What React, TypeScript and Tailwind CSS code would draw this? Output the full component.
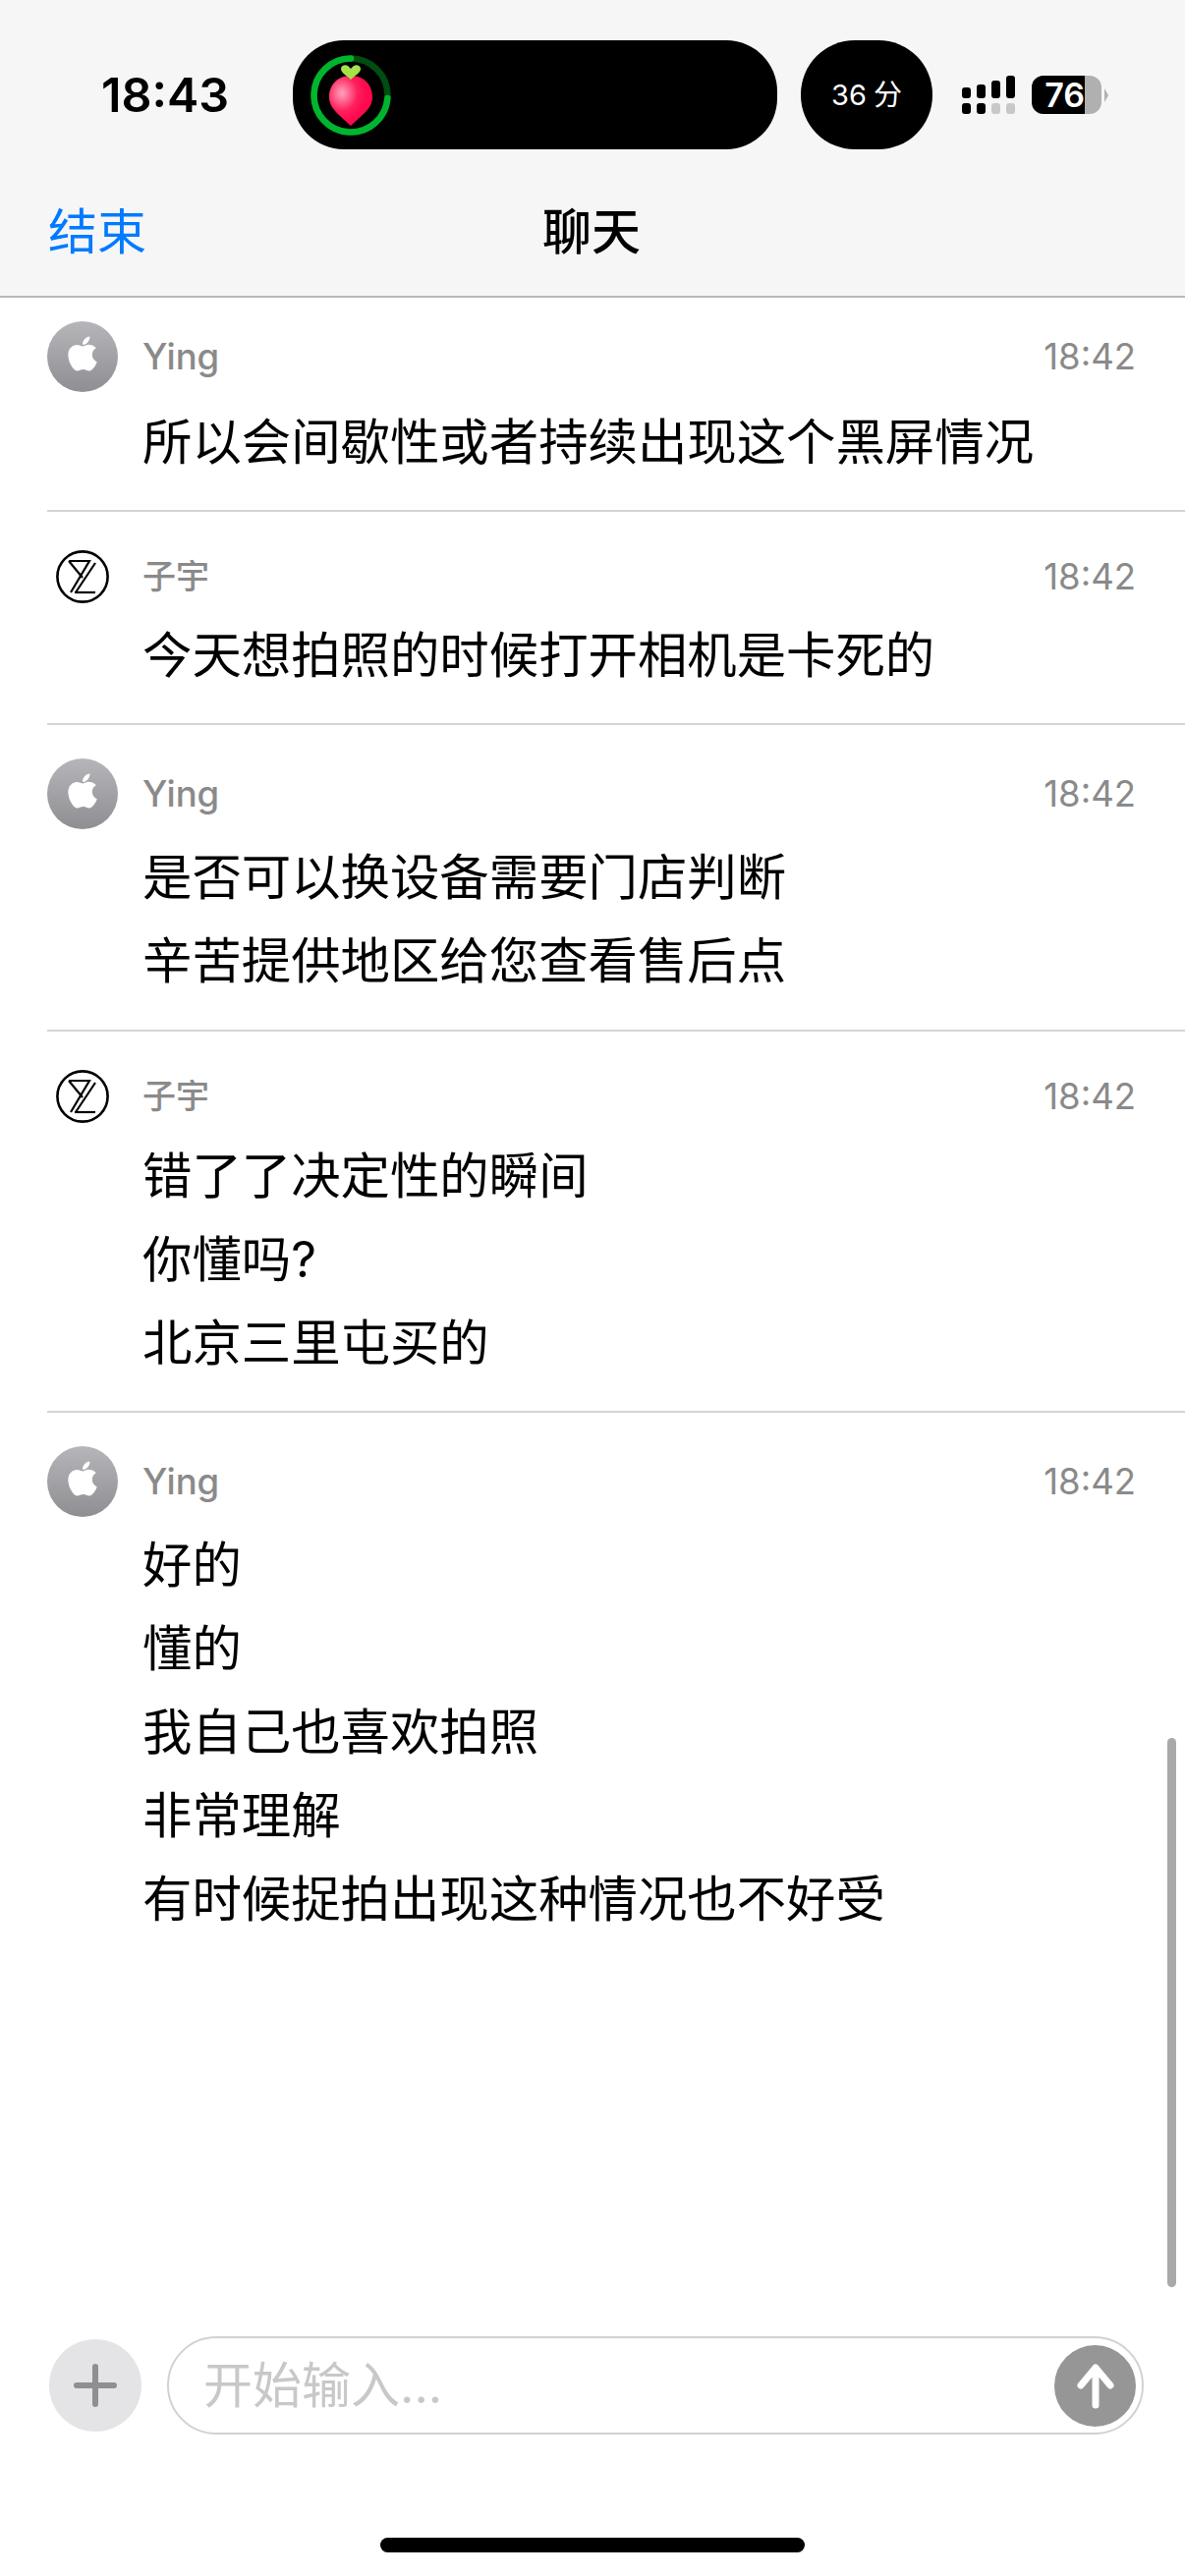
import React from "react";

const cjk = "font-['Inter','Noto_Sans_CJK_SC',sans-serif]";

function AppleAvatar() {
  return (
    <div className="w-[72px] h-[72px] rounded-full bg-gradient-to-b from-[#b6b6ba] to-[#8e8e93] flex items-center justify-center shrink-0">
      <svg viewBox="0 0 384 512" className="w-[32px] h-[40px] mb-[6px]" fill="#ffffff">
        <path d="M318.7 268.7c-.2-36.7 16.4-64.4 50-84.8-18.8-26.9-47.2-41.7-84.7-44.6-35.5-2.8-74.3 20.7-88.5 20.7-15 0-49.4-19.7-76.4-19.7C63.3 141.2 4 184.8 4 273.5q0 39.3 14.4 81.2c12.8 36.7 59 126.7 107.2 125.2 25.2-.6 43-17.9 75.8-17.9 31.8 0 48.3 17.9 76.4 17.9 48.6-.7 90.4-82.5 102.6-119.3-65.2-30.7-61.7-90-61.7-91.9zm-56.6-164.2c27.3-32.4 24.8-61.9 24-72.5-24.1 1.4-52 16.4-67.9 34.9-17.5 19.8-27.8 44.3-25.6 71.9 26.1 2 49.9-11.4 69.5-34.3z" />
      </svg>
    </div>
  );
}

function ZyAvatar() {
  return (
    <div className="w-[72px] h-[72px] flex items-center justify-center shrink-0">
      <svg viewBox="0 0 54 54" className="w-[54px] h-[54px]" fill="none" stroke="#000000">
        <circle cx="27" cy="27" r="25.6" strokeWidth="2.6" />
        <path d="M13 11H34L15 43" strokeWidth="2.2" />
        <path d="M19 43H40" strokeWidth="2.2" />
        <path d="M40 13L20 43" strokeWidth="2.2" />
        <path d="M13 11L27 28" strokeWidth="2.2" />
      </svg>
    </div>
  );
}

type MsgProps = {
  who: "Ying" | "子宇";
  lines: string[];
  rowClass: string;
  bodyClass: string;
};

function Msg({ who, lines, rowClass, bodyClass }: MsgProps) {
  return (
    <div className={rowClass}>
      <div className="flex items-center h-[72px] pr-[50px]">
        {who === "Ying" ? <AppleAvatar /> : <ZyAvatar />}
        <span className={who === "Ying" ? "ml-[25px] text-[36.5px] leading-[72px] font-medium text-[#8a8a8a]" : "ml-[25px] text-[34px] leading-[72px] font-medium text-[#8a8a8a]"}>{who}</span>
        <span className="ml-auto text-[36.5px] leading-[72px] text-[#8a8a8a]">18:42</span>
      </div>
      <div className={bodyClass}>
        {lines.map((l) => (
          <div key={l} className="text-[50.4px] leading-[85px] text-black whitespace-nowrap">
            {l}
          </div>
        ))}
      </div>
    </div>
  );
}

function StatusBar() {
  return (
    <div className="flex items-center pt-[41px]">
      <div className="w-[298px] pl-[103px] text-[48.5px] leading-[111px] font-semibold text-black">18:43</div>
      <div className="w-[493px] h-[111px] rounded-[52px] bg-black flex items-center pl-[18px]">
        <svg viewBox="0 0 82 82" className="w-[82px] h-[82px]">
          <defs>
            <radialGradient id="fruit" cx="0.3" cy="0.35" r="0.55">
              <stop offset="0" stopColor="#ffa3bc" />
              <stop offset="0.65" stopColor="#ff1f5c" />
              <stop offset="1" stopColor="#ff0a4e" />
            </radialGradient>
          </defs>
          <circle cx="41" cy="41" r="37.5" fill="none" stroke="#004d12" strokeWidth="6.5" />
          <path d="M78.4 44A37.5 37.5 0 1 1 41 3.5" fill="none" stroke="#00b52e" strokeWidth="6.5" strokeLinecap="round" />
          <path d="M41 21C27 21 19 31 19 43C19 55 31 62 41 72C51 62 63 55 63 43C63 31 55 21 41 21Z" fill="url(#fruit)" />
          <path d="M41 25C36 20 31 18 31 14C31 11 35 9 38 11C39.5 12 41 14 41 14C41 14 42.5 12 44 11C47 9 51 11 51 14C51 18 46 20 41 25Z" fill="#a5e24a" />
        </svg>
      </div>
      <div className="ml-[24px] w-[134px] h-[111px] rounded-[55px] bg-black flex items-center justify-center text-white text-[29px] leading-none gap-[7px]">
        <span>36</span>
        <span>分</span>
      </div>
      <div className="ml-[30px] w-[54px] h-[39px] flex gap-[6px]">
        <div className="flex-1 flex flex-col justify-end gap-[5px]">
          <div className="h-[11px] rounded-[3px] bg-black" />
          <div className="h-[11px] rounded-[3px] bg-black" />
        </div>
        <div className="flex-1 flex flex-col justify-end gap-[5px]">
          <div className="h-[14px] rounded-[3px] bg-black" />
          <div className="h-[11px] rounded-[3px] bg-black" />
        </div>
        <div className="flex-1 flex flex-col justify-end gap-[5px]">
          <div className="h-[18px] rounded-[3px] bg-black" />
          <div className="h-[11px] rounded-[3px] bg-[#c8c8c8]" />
        </div>
        <div className="flex-1 flex flex-col justify-end gap-[5px]">
          <div className="h-[23px] rounded-[3px] bg-black" />
          <div className="h-[11px] rounded-[3px] bg-[#c8c8c8]" />
        </div>
      </div>
      <div className="ml-[17px] flex items-center">
        <div className="w-[71px] h-[39px] rounded-[12px] overflow-hidden flex bg-[#b0b0b0]">
          <div className="w-[54px] h-full bg-black text-white text-[34px] font-semibold leading-[39px] text-right">76</div>
        </div>
        <div className="ml-[3px] w-0 h-0 border-y-[7px] border-y-transparent border-l-[4px] border-l-[#b0b0b0]" />
      </div>
    </div>
  );
}

export default function App() {
  return (
    <div className={`relative w-[1206px] h-[2622px] bg-white flex flex-col overflow-hidden ${cjk}`}>
      <header className="h-[303px] shrink-0 bg-[#f6f6f6] border-b-2 border-[#b8b8b8]">
        <StatusBar />
        <div className="grid grid-cols-[1fr_auto_1fr] pl-[49px] pr-[51px] pt-[36px]">
          <span className="text-[50px] leading-[96px] text-[#007aff]">结束</span>
          <span className="text-[50px] leading-[96px] font-medium text-black">聊天</span>
          <span />
        </div>
      </header>

      <main className="flex-1 min-h-0 overflow-hidden">
        <Msg who="Ying" lines={["所以会间歇性或者持续出现这个黑屏情况"]} rowClass="ml-[48px] pt-[24px] pb-[27px]" bodyClass="pl-[97px] mt-[8px]" />
        <Msg who="子宇" lines={["今天想拍照的时候打开相机是卡死的"]} rowClass="ml-[48px] pt-[30px] pb-[27px] border-t-2 border-[#d4d4d4]" bodyClass="pl-[97px] mt-[1px]" />
        <Msg who="Ying" lines={["是否可以换设备需要门店判断", "辛苦提供地区给您查看售后点"]} rowClass="ml-[48px] pt-[34px] pb-[28px] border-t-2 border-[#d4d4d4]" bodyClass="pl-[97px] mt-[6px]" />
        <Msg who="子宇" lines={["错了了决定性的瞬间", "你懂吗?", "北京三里屯买的"]} rowClass="ml-[48px] pt-[30px] pb-[27px] border-t-2 border-[#d4d4d4]" bodyClass="pl-[97px] mt-[2px]" />
        <Msg who="Ying" lines={["好的", "懂的", "我自己也喜欢拍照", "非常理解", "有时候捉拍出现这种情况也不好受"]} rowClass="ml-[48px] pt-[34px] border-t-2 border-[#d4d4d4]" bodyClass="pl-[97px] mt-[6px]" />
      </main>

      <footer className="shrink-0">
        <div className="flex items-center pl-[50px]">
          <div className="w-[94px] h-[94px] rounded-full bg-[#e4e4e6] flex items-center justify-center">
            <svg viewBox="0 0 44 44" className="w-[44px] h-[44px]" fill="none" stroke="#8e8e93" strokeWidth="6" strokeLinecap="round">
              <path d="M22 3V41M3 22H41" />
            </svg>
          </div>
          <div className="ml-[26px] w-[994px] h-[100px] rounded-[50px] border-2 border-[#d2d2d2] flex items-center justify-between pl-[35px] pr-[6px]">
            <span className="text-[50px] leading-none text-[#c8c8c8]">开始输入...</span>
            <div className="w-[83px] h-[83px] rounded-full bg-[#969696] flex items-center justify-center">
              <svg viewBox="0 0 44 48" className="w-[44px] h-[48px]" fill="none" stroke="#ffffff" strokeWidth="7" strokeLinecap="round" strokeLinejoin="round">
                <path d="M22 44V6M7 24L22 6L37 24" />
              </svg>
            </div>
          </div>
        </div>
        <div className="mt-[105px] mx-auto w-[432px] h-[15px] rounded-full bg-black" />
        <div className="h-[24px]" />
      </footer>

      <div className="absolute left-[1188px] top-[1769px] w-[9px] h-[559px] rounded-full bg-[#a9a9a9]" />
    </div>
  );
}
